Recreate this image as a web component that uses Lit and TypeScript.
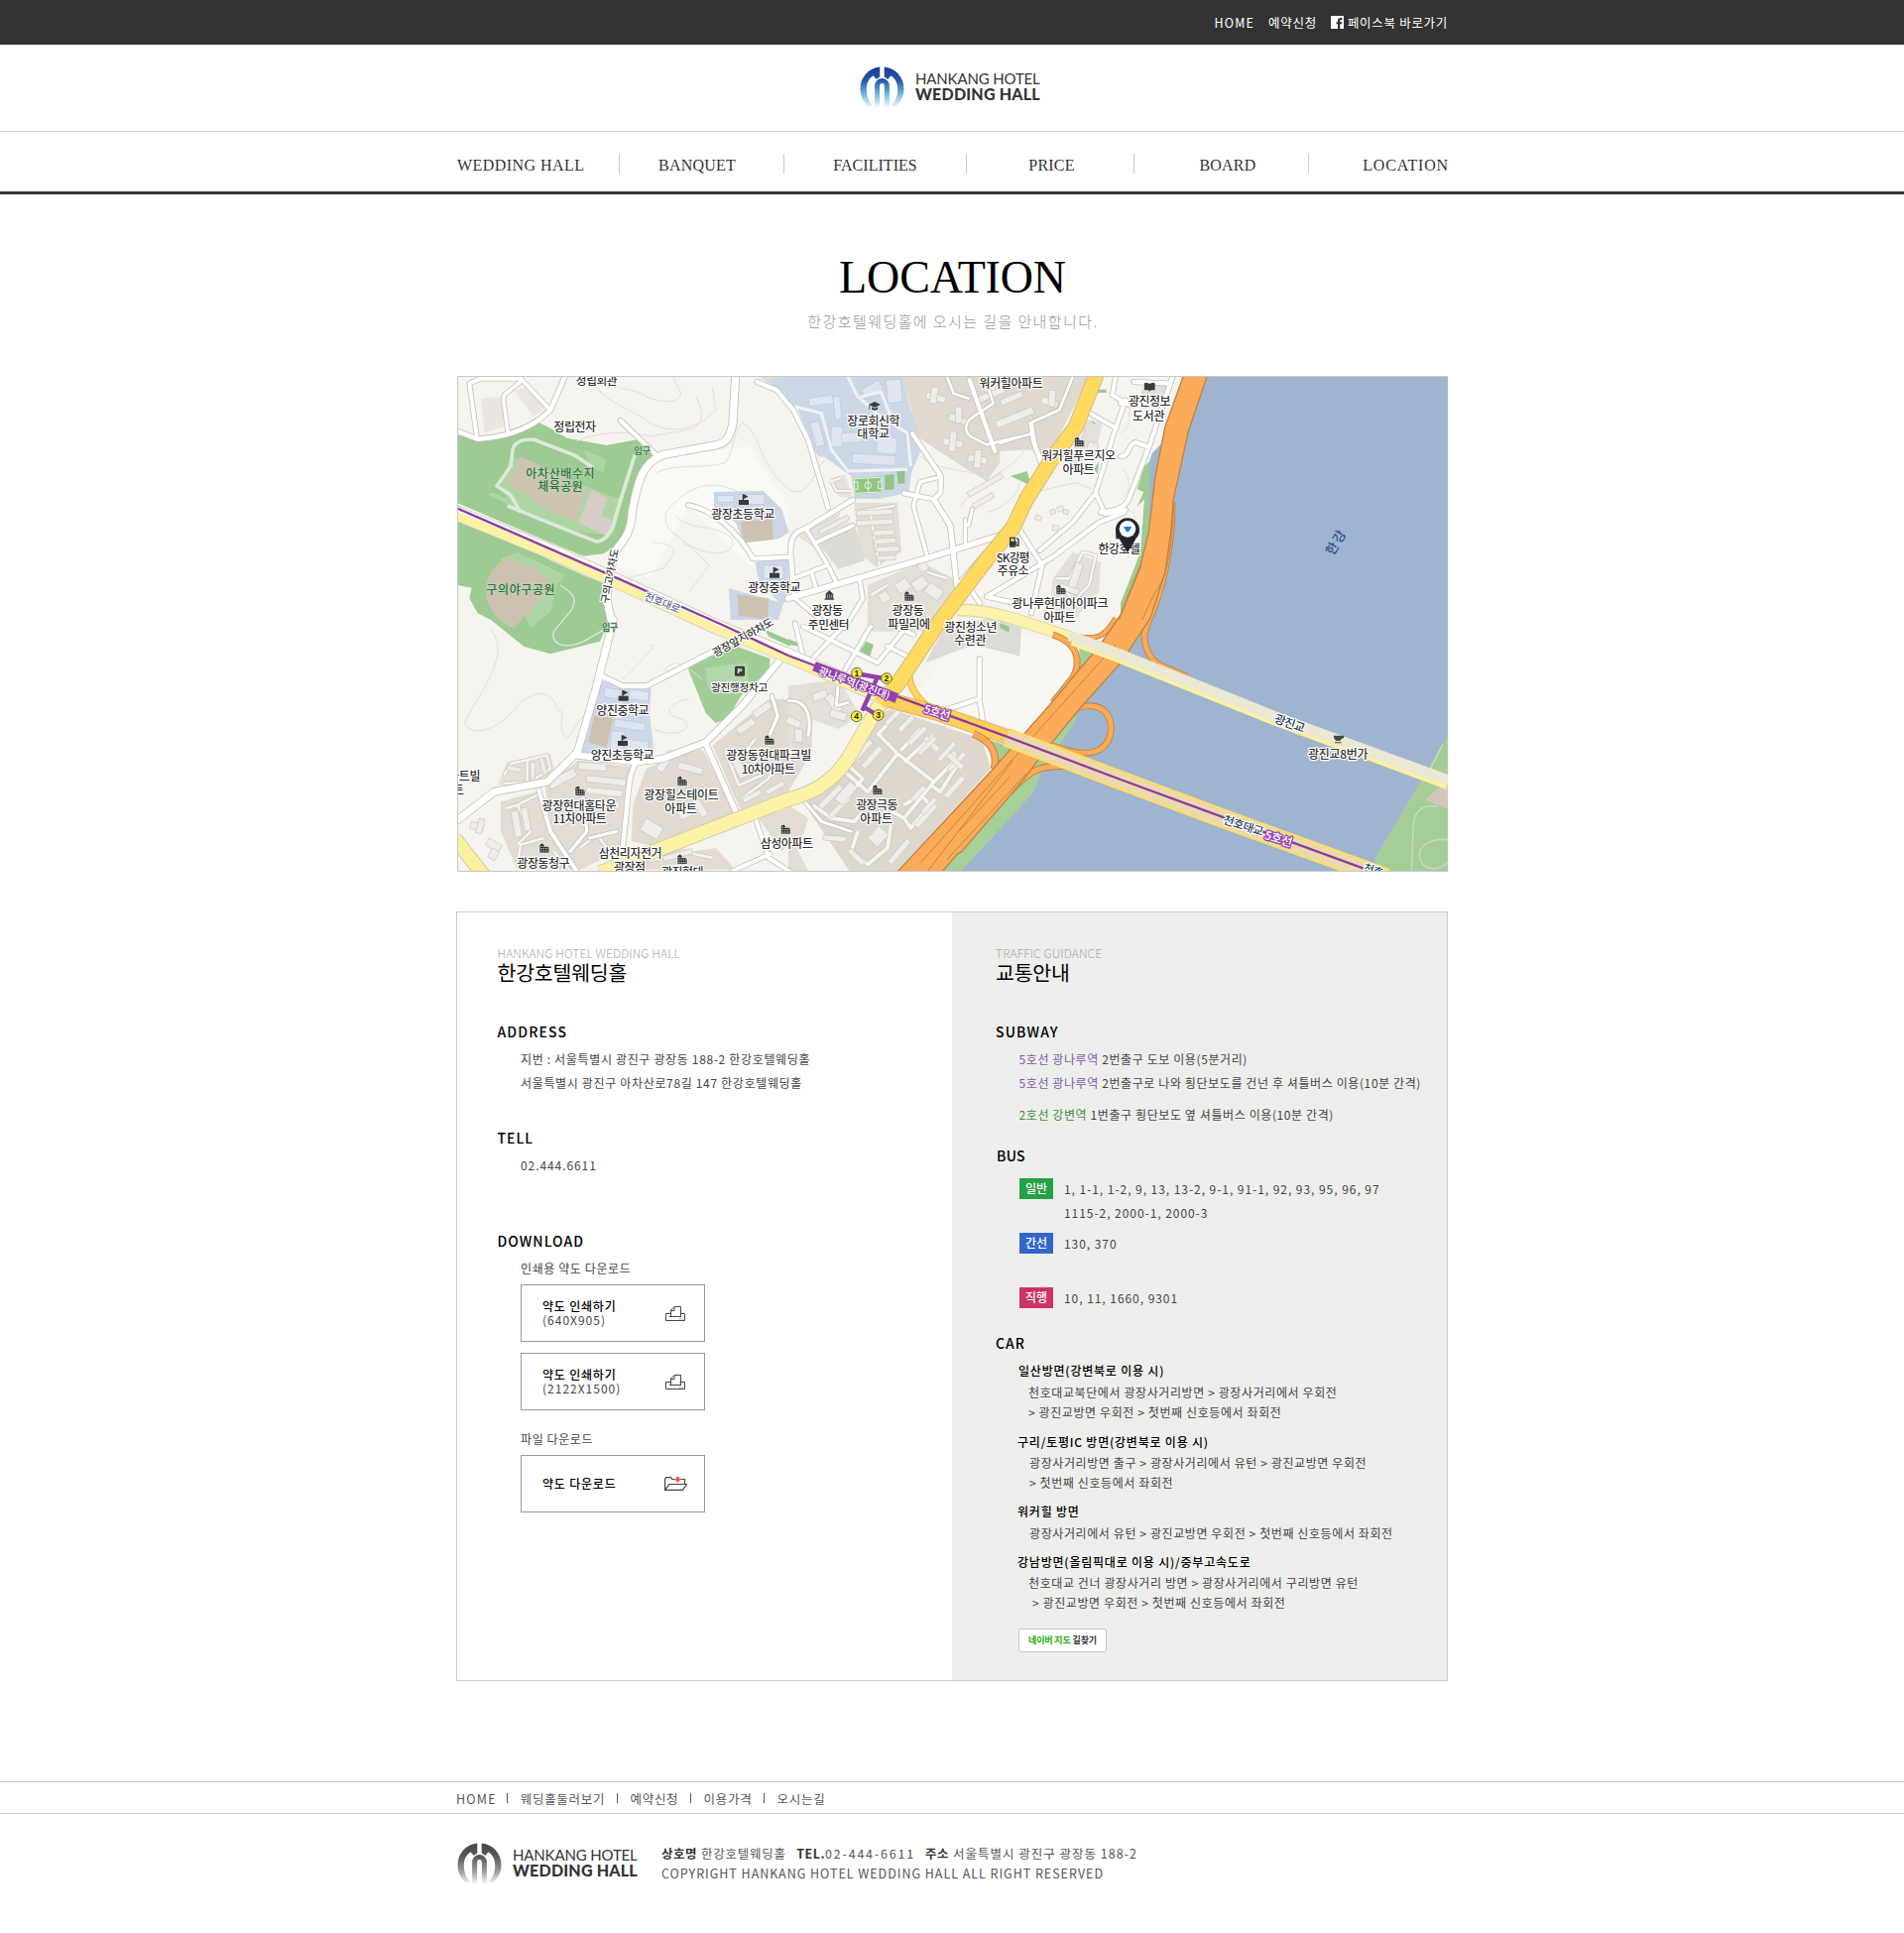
import { LitElement, html, css, svg } from "lit";
import { customElement } from "lit/decorators.js";

/* The map is drawn on a sheet of 3 units per pixel, split in tiles. */
const TILE: Record<string, [number, number]> = {
  A: [0, 0], B: [1020, 0], C: [2025, 0], D: [0, 765], E: [1020, 765], F: [2025, 765],
};
const at = (t: string) => `translate(${TILE[t][0]} ${TILE[t][1]})`;

type Area = [string, string, string];
const AREAS: Area[] = [
  ["A", "#fafaf5", "M560 225L640 265L900 240L1020 420V600L900 600L720 420L600 640L500 600Z"],
  ["E", "#f8f7f2", "M480 100L700 40L850 80L860 150L700 340L390 230Z"],
  // beige housing blocks
  ["A", "#ebe7df", "M90 95L155 90L160 180L100 200ZM190 70L240 60L290 120L250 150Z"],
  ["B", "#dfd9d0", "M345 30H910L790 265L770 290L735 250L640 255L640 290L600 345L540 310L380 205L370 120Z"],
  ["A", "#e2dcd2", "M930 30H1070V90L1020 110L985 65Z"],
  ["B", "#e3ded6", "M200 410H330L342 560L265 605L215 560Z"],
  ["B", "#e3ded6", "M240 660L400 590L500 640L520 690L430 800H240Z"],
  ["B", "#e8e4dc", "M10 500L130 440L200 480L100 560ZM130 350L170 325L195 400L150 390Z"],
  ["B", "#dcdad5", "M90 530L200 480L232 585L150 612Z"],
  ["B", "#e5e1da", "M870 150L950 170L930 260L860 300ZM860 560L945 590L940 680L870 760L790 740L800 640Z"],
  ["D", "#e0dad0", "M590 450L740 385L765 400L865 590L640 690L545 670L550 560Z"],
  ["D", "#e2dcd3", "M385 425L550 445L525 560L510 700L390 755L300 640L285 500Z"],
  ["D", "#e2dcd3", "M150 550L260 520L300 640L370 755H200L150 640Z"],
  ["D", "#e6e1d9", "M170 430L300 405L312 460L250 505L140 500Z"],
  ["D", "#e0dad0", "M790 380L960 240H1020L1095 260L1090 400L1020 520L875 575Z"],
  ["E", "#e4dfd7", "M0 200L150 180L220 290L150 330L70 300L20 370L0 480Z"],
  ["D", "#e2dcd3", "M600 720L800 690L860 755H560ZM930 600L1020 570L1060 640L1000 700Z"],
  ["E", "#ddd7ce", "M310 270L585 360L612 450L330 760H185L40 545L160 450L285 280Z"],
  ["E", "#e2dcd3", "M0 560L60 600L30 700L60 760H0Z"],
  ["E", "#dcdbd8", "M470 30L620 -10L705 25L700 110L560 75L415 130L440 80Z"],
  ["C", "#dfdfdd", "M70 45L140 50L130 100L60 90Z"],
  // campuses
  ["B", "#ccd7e6", "M-60 40L0 28H345L370 130L395 200L398 260L372 320L365 380L270 400L200 398L190 330L110 272L90 270L60 220L30 130L-40 70Z"],
  ["A", "#ccd7e6", "M795 378L945 375L1000 430L1022 500L990 520L885 530L860 470L795 430Z"],
  ["A", "#ccd7e6", "M920 590L1020 580L1025 700L1000 720L930 650ZM840 670L1005 715L990 765H845Z"],
  ["D", "#ccd8e8", "M455 185L605 205L600 280L614 405L540 430L390 405L432 255Z"],
  ["A", "#cdc2b0", "M875 470L970 460L975 522L885 532ZM865 688L960 700L958 765L870 752Z"],
  ["D", "#cdc2ad", "M432 290L492 290L470 386L415 370Z"],
  // parks
  ["A", "#9dcb93", "M20 205L80 225L170 205L265 168L300 185L350 215L470 237L570 218L612 265L590 300L560 380L545 480L500 540L460 565L400 572L250 510L20 412Z"],
  ["A", "#9dcb93", "M20 465L200 535L300 585L400 630L480 662L472 780L450 830L300 868L220 845L120 765L80 745L55 700L62 668L20 660Z"],
  ["A", "#aed6a4", "M180 270L480 390L520 400L490 510L380 500L160 410L110 385L125 380L170 400L150 355ZM400 250L470 280L460 320L420 300ZM150 580L200 560L345 630L320 660L300 740L240 790Z"],
  ["A", "#cfc4b1", "M200 282L208 270L412 366L378 466L300 440L172 350L178 325L190 330Z"],
  ["A", "#d6cdc6", "M425 370L472 398L456 450L486 462L478 514L384 472Z"],
  ["A", "#cdc2b0", "M106 690C100 640 130 590 172 580L250 604L302 650L292 680L190 790C150 780 115 740 106 690Z"],
  ["D", "#a0ce96", "M715 145L850 75L965 118L962 150L880 225L835 300L800 312L770 282Z"],
  ["D", "#b2d8ab", "M768 145L895 130L900 185L775 200Z"],
  ["B", "#9dcb93", "M672 330L722 315L735 360ZM930 68H962V78H930ZM940 285L925 310L935 325ZM915 160L930 170L925 175Z"],
  ["B", "#90c583", "M197 336L282 331L284 380L200 385ZM292 327L320 325V370L292 372ZM328 315L352 312V352L332 354Z"],
  ["E", "#98ca8f", "M235 65L258 75L245 115L212 100ZM0 58L30 70V80L0 74ZM640 10L668 20V38L640 25Z"],
  ["D", "#98ca8f", "M950 30L1025 62V80L960 50Z"],
];

const WATER = "M2215 27L2155 225L2120 262L2108 300L2105 420L2105 560L2060 760L1900 1000L1765 1255L1540 1527H3015V27Z";
const SHORE: Area[] = [
  ["C", "#9dcb93", "M72 300L50 370L70 378L50 422L72 400L60 560L0 715V775L60 640L85 500L88 285Z"],
  ["E", "#a3cd97", "M880 70L935 100L880 165Z"],
  ["E", "#a3cd97", "M615 365L690 390L630 445Z"],
  ["E", "#a6cf9a", "M865 280L872 300L760 470L742 520L690 580L520 762H440L700 490L760 380Z"],
  ["F", "#a6cd98", "M990 350L930 450L765 730L820 765H990Z"],
  ["F", "#d3c6ba", "M990 500L960 510L920 545L990 572Z"],
];

type Road = [string, number, string];
const ROADS: Road[] = [
  ["A", 14, "M20 195L80 218C180 212 250 180 300 130L345 27"],
  ["A", 12, "M78 215L55 50L90 35L210 35L300 130"],
  ["A", 11, "M172 200L158 100L160 85L215 40"],
  ["A", 22, "M860 27L852 170C842 225 825 235 780 240L640 266C580 290 565 340 547 440C545 520 500 540 490 570L470 700L487 780"],
  ["A", 13, "M512 162L620 266"],
  ["A", 13, "M717 418C790 430 870 500 913 580L1025 575"],
  ["A", 13, "M925 45L985 70L1035 130L1080 220L1140 425"],
  ["B", 14, "M195 402L50 490C10 500 0 530 10 600L15 680"],
  ["B", 17, "M0 700L130 662L420 578L640 510"],
  ["B", 13, "M375 202L462 330L460 380L440 400L350 382"],
  ["B", 11, "M460 332L398 348L378 420L418 565"],
  ["B", 15, "M440 400L490 480L510 665L595 565"],
  ["B", 12, "M55 492L120 600L148 658M85 530L195 480M15 640L112 602M70 620L85 675M20 700L110 775M215 640L225 700L170 790"],
  ["B", 10, "M535 462V530M556 430L545 480"],
  ["B", 14, "M735 175L742 225L765 290"],
  ["B", 13, "M548 40L625 255"],
  ["B", 8, "M480 30L500 80L545 95M600 50L620 110L560 150C530 170 530 200 560 215L600 235L700 210M730 170L820 130L860 30M640 230L740 200"],
  ["B", 12, "M898 132L992 185M990 27L980 85L1030 115M1020 100L985 200L930 380L860 470L760 555M930 382L958 445L1020 432"],
  ["B", 13, "M1015 440L940 470L800 575L600 695L690 715M698 490L768 600L735 745M548 670L580 715"],
  ["C", 13, "M158 27L90 230L25 400C10 430 -20 435 -60 440M85 242L45 228C20 235 30 270 0 270M40 45L150 50M0 110L60 95"],
  ["D", 21, "M490 0L440 200L382 400L290 490L130 520L20 605"],
  ["D", 15, "M450 168L520 200H590L800 92"],
  ["D", 19, "M1000 115L880 260L770 370L640 420L560 430L385 410"],
  ["D", 14, "M562 430C530 470 540 520 517 700"],
  ["D", 16, "M768 370L870 600"],
  ["D", 12, "M265 515L300 640L380 760M920 600L960 720L1030 765M965 708L850 760"],
  ["D", 10, "M970 230L988 290L965 345M400 540L410 640L360 700M420 660L500 640"],
  ["E", 13, "M578 118V240L592 330M478 272L578 238"],
  ["E", 12, "M20 10L45 112M45 20L270 130L350 30M165 20L75 115M232 50L172 150M250 20L230 50M310 15L380 45M300 80L370 115"],
  ["E", 9, "M0 245C60 240 70 300 60 350M150 200L145 260L180 250M45 545L100 610L190 640"],
];

/* lanes between the blocks of flats */
const LANES: Road[] = [
  ["E", 11, "M320 295L272 345L330 405L240 520L160 450M330 405L440 490L500 430M440 350L350 430M440 490L350 600L315 580M400 330L340 395M500 400L510 440L460 520L430 500M180 440L225 480L130 600L75 560M130 600L200 610L225 580M210 640L190 700L240 740L300 690L310 620M350 600L370 630L430 560L400 530L350 560"],
  ["D", 8, "M160 470L180 435L290 410L300 450L240 490L160 495M230 425V490M165 570L200 560L240 640L200 680M200 560L260 530M200 740L210 680L280 660M310 700L360 760M390 690L440 650L480 700M830 400L870 500L940 470L900 400M850 450L920 360M1000 400L960 480L880 540M600 730L700 700L790 720"],
  ["B", 8, "M130 345L160 335M130 345L145 375L190 375M245 430L275 600M250 690L300 660M420 620L480 640M810 640L850 640L890 560L930 570L910 660L870 700L830 680M200 440L320 420"],
];

type Block = [string, number, number, number, number, number];
const BLOCKS: Block[] = [
  ["B", 560, 95, 95, 20, -23], ["B", 590, 62, 100, 20, -23], ["B", 625, 165, 120, 22, -22], ["B", 640, 100, 70, 18, -23],
  ["B", 420, 75, 60, 20, 15], ["B", 435, 60, 20, 50, 10], ["B", 490, 140, 55, 20, 20], ["B", 505, 120, 20, 50, 0],
  ["B", 470, 215, 60, 20, 10], ["B", 490, 195, 20, 60, 5], ["B", 545, 265, 58, 20, 10], ["B", 565, 250, 20, 55, 5], ["B", 770, 90, 50, 20, 20], ["B", 790, 70, 20, 50, 5],
  ["B", 205, 435, 110, 16, -3], ["B", 205, 465, 112, 16, -3], ["B", 255, 495, 65, 16, -3], ["B", 260, 520, 65, 16, -3], ["B", 265, 545, 70, 16, -3], ["B", 270, 572, 55, 14, -3],
  ["B", 540, 380, 118, 16, -30], ["B", 555, 415, 70, 16, -30], ["B", 320, 660, 40, 34, -35], ["B", 370, 655, 44, 34, -35], ["B", 390, 600, 26, 26, -30], ["B", 430, 650, 50, 36, 35], ["B", 270, 690, 30, 30, -30],
  ["B", 60, 480, 100, 14, -28], ["B", 90, 495, 100, 14, -28], ["B", 870, 180, 28, 55, 18], ["B", 910, 225, 30, 40, 18], ["B", 870, 590, 24, 90, 18], ["B", 825, 655, 60, 18, 18],
  ["B", 750, 447, 18, 14, 20], ["B", 790, 435, 16, 13, -20], ["B", 812, 425, 18, 15, -20], ["B", 835, 430, 15, 13, 20], ["B", 800, 478, 18, 15, 10],
  ["D", 290, 490, 90, 26, -28], ["D", 385, 430, 85, 22, 4], ["D", 410, 470, 120, 20, 6], ["D", 410, 505, 110, 20, 6], ["D", 410, 540, 100, 20, 6], ["D", 320, 610, 60, 20, -30], ["D", 620, 450, 70, 22, -55], ["D", 690, 430, 75, 20, 15],
  ["D", 590, 600, 60, 40, 30], ["D", 680, 570, 50, 40, -25], ["D", 750, 540, 55, 22, 60], ["D", 180, 580, 22, 80, -10], ["D", 210, 570, 20, 70, -10], ["D", 170, 440, 45, 14, 10], ["D", 240, 430, 14, 50, 0], ["D", 265, 420, 14, 50, -15],
  ["D", 60, 610, 40, 22, 10], ["D", 85, 600, 18, 45, 15], ["D", 115, 660, 45, 24, 30], ["D", 125, 690, 24, 30, 30], ["D", 860, 330, 60, 22, -35], ["D", 910, 280, 60, 22, -35], ["D", 840, 410, 24, 80, -25], ["D", 880, 540, 60, 16, -28], ["D", 950, 515, 60, 16, -28], ["D", 640, 715, 90, 16, -15],
  ["E", 290, 310, 70, 15, -45], ["E", 330, 330, 60, 15, -45], ["E", 190, 420, 80, 17, -48], ["E", 220, 440, 80, 17, -48], ["E", 420, 350, 55, 17, 45], ["E", 360, 370, 70, 15, -45], ["E", 390, 400, 70, 15, -45], ["E", 90, 560, 90, 18, -45], ["E", 120, 590, 80, 16, -45],
  ["E", 450, 420, 70, 15, -48], ["E", 480, 450, 70, 15, -48], ["E", 490, 400, 60, 17, 45], ["E", 470, 530, 80, 16, -48], ["E", 380, 620, 90, 17, -48], ["E", 300, 730, 90, 17, -50], ["E", 190, 690, 60, 16, 45], ["E", 105, 650, 70, 16, 5], ["E", 370, 540, 55, 15, -48], ["E", 400, 580, 60, 15, -48], ["E", 240, 660, 50, 40, -48], ["E", 140, 540, 70, 30, -48],
  ["E", 70, 225, 45, 24, -20], ["E", 110, 235, 24, 60, -35], ["E", 130, 270, 50, 24, 15], ["E", 0, 290, 45, 22, 25], ["E", 20, 330, 22, 40, 0],
];
const CAMPUS: Block[] = [
  ["B", 295, 40, 45, 70, -5], ["B", 60, 95, 75, 25, -8], ["B", 135, 90, 20, 70, -6], ["B", 65, 170, 28, 75, -14], ["B", 130, 180, 35, 60, 2], ["B", 160, 200, 60, 30, -3], ["B", 195, 262, 130, 30, 3], ["B", 270, 210, 60, 50, 5], ["B", 220, 70, 60, 30, -30],
  ["A", 805, 388, 50, 22, 0], ["A", 870, 385, 78, 30, 0], ["A", 945, 600, 60, 40, 0],
  ["D", 465, 205, 50, 28, 8], ["D", 540, 210, 60, 28, 8], ["D", 495, 300, 95, 24, 8], ["D", 485, 335, 40, 60, 5], ["D", 530, 360, 70, 30, 8], ["D", 500, 240, 22, 60, 5],
];

const HIGHWAY = "M2215 27L2160 180L2130 330L2110 500L2085 600L2025 750L1960 845L1900 915L1830 1000L1720 1125L1640 1215L1350 1527H1485L1530 1475L1545 1465L1720 1262L1810 1145L1900 1035L2030 890L2065 835L2115 760L2160 620L2177 500L2185 400L2230 195L2287 27Z";
const RAMPS: Road[] = [
  ["E", 15, "M868 268C935 245 982 275 975 340C965 405 905 410 850 397L790 378"],
  ["E", 17, "M670 520C740 440 780 440 850 442"],
  ["E", 17, "M560 345C622 370 632 410 622 452"],
  ["E", 15, "M800 45C880 70 885 130 860 175L800 250"],
  ["E", 12, "M870 50C940 66 965 40 990 -5"],
  ["F", 15, "M85 -5L72 45C70 80 90 120 115 135L200 172"],
  ["C", 8, "M160 410C160 560 130 680 82 785"],
];

type Label = [string, number, number, string, number, number?, string?];
const LABELS: Label[] = [
  ["A", 440, 40, "정립회관", 125], ["A", 374, 183, "정립전자", 128], ["A", 578, 252, "입구", 50, 0, "park"],
  ["A", 330, 322, "아차산배수지", 208, 0, "park"], ["A", 330, 362, "체육공원", 136, 0, "park"], ["A", 883, 446, "광장초등학교", 192],
  ["A", 978, 668, "광장중학교", 160], ["A", 210, 675, "구의야구공원", 208, 0, "park"], ["A", 478, 632, "구의고가차도", 168, -79],
  ["A", 640, 712, "천호대로", 115, 22, "road"], ["A", 480, 785, "입구", 48, 0, "park"],
  ["B", 258, 163, "장로회신학", 160], ["B", 257, 204, "대학교", 98], ["B", 674, 50, "워커힐아파트", 193], ["B", 878, 270, "워커힐푸르지오", 225],
  ["B", 878, 310, "아파트", 97], ["B", 680, 577, "SK강평", 102], ["B", 680, 618, "주유소", 96], ["B", 1001, 552, "한강호텔", 127],
  ["B", 822, 717, "광나루현대아이파크", 292], ["B", 820, 757, "아파트", 97], ["B", 118, 736, "광장동", 95], ["B", 122, 778, "주민센터", 125],
  ["B", 362, 738, "광장동", 97], ["B", 365, 779, "파밀리에", 128], ["E", 552, 22, "광진청소년", 160], ["E", 550, 63, "수련관", 98],
  ["C", 88, 105, "광진정보", 128], ["C", 85, 148, "도서관", 98], ["C", 652, 532, "한강", 78, -60, "river"],
  ["D", 519, 275, "양진중학교", 160], ["D", 518, 410, "양진초등학교", 192], ["D", 387, 562, "광장현대홈타운", 225], ["D", 389, 603, "11차아파트", 163],
  ["D", 279, 736, "광장동청구", 160], ["D", 542, 708, "삼천리자전거", 192], ["D", 540, 748, "광장점", 96], ["D", 700, 765, "광진현대", 128],
  ["D", 696, 530, "광장힐스테이트", 227], ["D", 695, 573, "아파트", 98], ["D", 961, 409, "광장동현대파크빌", 258], ["D", 960, 451, "10차아파트", 163],
  ["D", 1015, 678, "삼성아파트", 160], ["D", 872, 203, "광진행정차고", 172], ["D", 882, 52, "광장앞지하차도", 205, -29],
  ["D", 40, 474, "아트빌", 98], ["D", -10, 515, "아파트", 98], ["E", 268, 560, "광장극동", 127], ["E", 266, 602, "아파트", 98],
  ["E", 200, 190, "광나루역(광진대)", 228, 20, "station"], ["E", 450, 280, "5호선", 82, 17, "line"],
  ["F", 512, 313, "광진교", 95, 19, "bridge"], ["F", 658, 406, "광진교8번가", 182], ["F", 372, 622, "천호대교", 125, 18, "bridge"],
  ["F", 478, 662, "5호선", 85, 17, "line"], ["F", 765, 757, "천호", 60, 17, "bridge"],
];
const FLATS: [string, number, number][] = [
  ["B", 881, 226], ["B", 825, 673], ["B", 366, 693], ["D", 390, 517], ["D", 699, 487], ["D", 963, 363], ["D", 282, 690], ["D", 699, 724], ["D", 1012, 633], ["E", 270, 514],
];
const SCHOOLS: [string, number, number][] = [["A", 885, 402], ["A", 978, 623], ["D", 521, 230], ["D", 519, 366]];
const EXITS: [number, number, string][] = [[207, 161, "1"], [297, 177, "2"], [272, 288, "3"], [206, 292, "4"]];

const CONTOURS: Area[] = [
  ["A", "", "M470 30C500 80 560 60 590 90C640 110 690 110 695 80L670 30M430 50C480 120 560 130 600 170C680 210 760 180 800 130L790 60M380 225C430 200 520 190 600 210L720 190C760 180 770 140 740 90"],
  ["A", "", "M880 170C920 180 930 260 980 330L1020 370M880 170C850 200 860 240 830 290C760 310 680 290 620 320M870 380C800 340 720 350 650 440C640 500 680 500 720 540L780 600L720 680M610 530C700 540 680 560 640 610L530 640M680 450C720 500 800 470 850 520C860 570 790 580 700 530"],
  ["D", "", "M120 30C180 100 100 200 40 310C60 360 150 330 200 260C260 200 310 220 320 270C360 280 310 320 350 360L400 290M600 80C640 60 560 140 520 180M640 160C680 100 720 150 760 180M720 240C650 250 640 290 700 300C740 330 680 360 610 330"],
  ["B", "", "M0 370C60 400 70 330 110 280M400 270C480 330 560 300 620 350M520 420C580 340 700 300 720 240M600 440C640 430 690 400 700 350M740 380L870 350L920 370"],
  ["C", "", "M0 200C40 180 20 140 30 120M10 310C40 360 20 380 0 400M20 430C60 440 50 520 20 580"],
];

const block = (b: Block) => svg`<rect x=${b[1]} y=${b[2]} width=${b[3]} height=${b[4]}
  transform="${at(b[0])} rotate(${b[5]} ${b[1]} ${b[2]})"/>`;
const area = (a: Area) => svg`<path transform=${at(a[0])} fill=${a[1]} d=${a[2]}/>`;
const stroke = (r: Road, extra: number) => svg`<path transform=${at(r[0])} stroke-width=${r[1] + extra} d=${r[2]}/>`;

/* A name squeezed into a short width is set smaller. */
const nameSize = (s: string, w: number) =>
  /^[가-힣]+$/.test(s) ? Math.min(36, Math.round(w / (s.length * 0.89))) : 36;

@customElement("area-map")
export class AreaMap extends LitElement {
  static styles = css`
    :host { display: block; width: 999px; height: 500px; box-sizing: border-box; }
    svg { display: block; }
    text { font-family: "Noto Sans CJK KR", sans-serif; font-size: 36px; font-weight: 500; fill: #333;
      stroke: #fff; stroke-width: 7px; stroke-linejoin: round; paint-order: stroke; text-anchor: middle; }
    text.park { fill: #3d6a4c; stroke: #b4dcae; stroke-width: 4px; }
    text.road { fill: #6468a8; }
    text.river { fill: #2a5088; stroke: none; }
    text.station { fill: #fff; stroke: #8d3fac; stroke-width: 5px; }
    text.line { fill: #fff; stroke: #9a48b4; stroke-width: 8px; }
    text.bridge { fill: #1f3f66; }
    text.exit { fill: #222; stroke: none; font: bold 26px "Liberation Sans", sans-serif; }
    text.park-sign { fill: #fff; stroke: none; font: bold 22px "Liberation Sans", sans-serif; }
  `;

  render() {
    return html`<svg width="999" height="500" viewBox="18 27 2997 1500">
      <rect x="18" y="27" width="2997" height="1500" fill="#f5f4ee"/>
      ${AREAS.map(area)}
      <g fill="none" stroke="#e2dfd6" stroke-width="3">${CONTOURS.map((c) => svg`<path transform=${at(c[0])} d=${c[2]}/>`)}</g>
      <g fill="none" stroke="#dce9d9" stroke-width="11" stroke-linejoin="round">
        <path d="M210 440L180 388L138 360L180 300L186 250C192 225 215 218 250 220L375 268L430 305M170 420L380 505L440 528C470 525 480 500 490 480L510 410L556 265"/>
        <path stroke-width="4" d="M330 660C380 690 380 710 360 740L310 800C300 850 360 850 400 830L470 790"/>
      </g>
      <path d="${WATER}" fill="#9fb5cf"/>
      ${SHORE.map(area)}
      <g fill="none" stroke="#bfdcb6" stroke-width="5"><path d="M2985 1330C2930 1320 2910 1350 2910 1400L2905 1527M3015 1430C2960 1425 2925 1450 2930 1480C2935 1520 2980 1530 3015 1500M3000 1140L2960 1220"/></g>
      <g fill="#dde5f0" stroke="#b9c7db" stroke-width="2">${CAMPUS.map(block)}</g>
      <path d="M1200 30L1230 90L1300 150L1380 200L1390 300M1040 120L1120 140L1150 250L1200 315L1380 310M1240 90L1300 75L1330 150" fill="none" stroke="#eef2f7" stroke-width="9"/>
      <path d="M1219 338L1301 334L1303 378L1221 382ZM1260 336L1262 380M1251 358a10 10 0 1 0 20 0a10 10 0 1 0 -20 0M1220 348H1230V370H1221M1302 346H1292V368H1302" fill="none" stroke="#e8f5e4" stroke-width="3"/>
      <g fill="none" stroke="#cfc8c1" stroke-linejoin="round">${LANES.map((r) => stroke(r, 5))}</g>
      <g fill="none" stroke="#f6f5f1" stroke-linejoin="round">${LANES.map((r) => stroke(r, 0))}</g>
      <g fill="#f0eeea" stroke="#cdc5bc" stroke-width="2">${BLOCKS.map(block)}</g>
      <g fill="none" stroke="#c5c0bc" stroke-linejoin="round" stroke-linecap="round">${ROADS.map((r) => stroke(r, 5))}</g>
      <g fill="none" stroke="#fff" stroke-linejoin="round" stroke-linecap="round">${ROADS.map((r) => stroke(r, 0))}</g>

      <g fill="none" stroke-linejoin="round">
        <path d="M10 1425L100 1540" stroke="#c9c3a8" stroke-width="45"/><path d="M10 1425L100 1540" stroke="#fdf0a0" stroke-width="40"/>
        <path d="M1300 1015L1200 1185C1150 1260 1090 1290 1020 1308L870 1366L640 1455L450 1530" stroke="#cfc6a0" stroke-width="45"/>
        <path d="M1300 1015L1200 1185C1150 1260 1090 1290 1020 1308L870 1366L640 1455L450 1530" stroke="#fdf2a6" stroke-width="40"/>
        <path d="M1530 735C1640 735 1700 760 1880 820L2040 878" stroke="#d8cfa4" stroke-width="37"/>
        <path d="M1530 735C1640 735 1700 760 1880 820L2040 878" stroke="#fdf3ac" stroke-width="32"/>
        <path d="M10 440L310 562L590 688L800 785L1020 873L1300 995" stroke="#cbc5b4" stroke-width="46"/>
        <path d="M10 440L310 562L590 688L800 785L1020 873L1300 995" stroke="#fff" stroke-width="41"/>
        <path d="M10 448L310 570L590 697L800 793L1020 882L1300 1003" stroke="#fcf1a4" stroke-width="26"/>
        <path d="M1385 935C1390 980 1420 1010 1450 1035" stroke="#d8b070" stroke-width="22"/><path d="M1385 935C1390 980 1420 1010 1450 1035" stroke="#ffd35c" stroke-width="17"/>
        <path d="M1310 1003L1480 1050L1700 1125" stroke="#d3ae6c" stroke-width="47"/>
        <path d="M1955 15L1890 180L1810 290L1740 400L1700 485L1610 595L1470 780L1350 960L1300 1020" stroke="#cdb67c" stroke-width="48"/>
        <path d="M1955 15L1890 180L1810 290L1740 400L1700 485L1610 595L1470 780L1350 960L1300 1020" stroke="#ffda5e" stroke-width="43"/>
        <path d="M1310 1003L1480 1050L1700 1125" stroke="#ffcd58" stroke-width="42"/>
      </g>
      <g fill="none" stroke="#b9803f">${RAMPS.map((r) => stroke(r, 5))}</g>
      <g fill="none" stroke="#fba957">${RAMPS.map((r) => stroke(r, 0))}</g>
      <path d="${HIGHWAY}" fill="#fbab59" stroke="#bd8444" stroke-width="4" stroke-linejoin="round"/>
      <g fill="none" stroke="#c4853f" stroke-width="3">
        <path d="M2186 410C2180 560 2165 640 2130 680L2090 765M2088 600L2020 765M2010 840L1700 1185L1420 1500M1740 1230L1500 1490M1690 1240L1540 1400M1700 1190L1440 1527"/>
      </g>
      <g fill="none">
        <path d="M1880 825L2030 881L2485 1064L3015 1260" stroke="#fbf1a0" stroke-width="36"/>
        <path d="M1870 812L2030 872L2485 1055L3015 1250" stroke="#ebe9d3" stroke-width="32"/>
        <path d="M1680 1120L2030 1252L2360 1375L2830 1545" stroke="#fddc70" stroke-width="58"/>
        <path d="M1680 1120L2030 1252L2360 1375L2830 1545" stroke="#ead9b0" stroke-width="42"/>
        <path d="M10 424L500 638L820 780L1020 873L1350 997L1680 1118L2025 1248L2330 1360L2760 1517" stroke="#8b3d9f" stroke-width="7"/>
        <path d="M1098 905L1348 1002" stroke="#9340b2" stroke-width="30"/>
        <path d="M1240 930L1308 942M1287 944L1243 1040M1245 1026L1280 1048" stroke="#9340b2" stroke-width="13"/>
      </g>

      ${FLATS.map(([t, x, y]) => svg`<g transform="${at(t)} translate(${x - 15} ${y - 15})">
        <path fill="#333" stroke="#fff" stroke-width="2" d="M0 6L3 2H6V0H11V2L15 6V10H24L30 14V30H0Z"/>
        <path stroke="#fff" stroke-width="2.4" stroke-dasharray="4 3" d="M4 10H14M4 17H28M4 24H28"/></g>`)}
      ${SCHOOLS.map(([t, x, y]) => svg`<path transform="${at(t)} translate(${x} ${y})" fill="#3a3a3a" d="M-15 0H-4V-17H0L14 -10L0 -3V0H15V15H-15Z"/>`)}
      <g transform="translate(873 920)"><rect x="-15" y="-15" width="30" height="30" rx="4" fill="#3d3d3d"/><text class="park-sign" y="8">P</text></g>
      <path transform="translate(1144 690)" fill="#3a3a3a" stroke="#fff" stroke-width="1.5" d="M-15 15V10H-12V-4L0 -15L12 -4V10H15V15ZM-6 -2V10M0 -2V10M6 -2V10"/>
      <path transform="translate(1281 118)" fill="#3a3a3a" d="M-18 -4L0 -13L18 -4L0 4ZM-9 3L0 8L9 3V10L0 14L-9 10ZM-17 -3V10H-14V-3Z"/>
      <path transform="translate(2113 60)" fill="#3a3a3a" d="M-16 -11Q-6 -14 0 -9Q6 -14 16 -11V10H4L0 14L-4 10H-16Z"/>
      <path transform="translate(1703 530)" fill="#3a3a3a" fill-rule="evenodd" d="M-14 -15H4V-2H8V8H11V-6L6 -12L9 -14L15 -8V12H5V2H4V15H-14ZM-10 -11V-3H0V-11Z"/>
      <path transform="translate(2685 1125)" fill="#444" d="M-16 -10H14Q18 -10 15 -4Q12 0 8 0L4 6H-8Q-15 0 -16 -10ZM-12 10H8V13H-12Z"/>
      <rect x="2011" y="492" width="26" height="28" fill="#222"/>

      ${LABELS.map(([t, x, y, s, w, r, c]) => svg`<text class=${c ?? ""} transform="${at(t)} translate(${x} ${y}) rotate(${r ?? 0})"
        y="13" textLength=${w} style="font-size:${c === "station" ? 32 : c === "river" ? 40 : nameSize(s, w)}px">${s}</text>`)}
      ${EXITS.map(([x, y, n]) => svg`<g transform="translate(${1020 + x} ${765 + y})"><circle r="16" fill="#f8ee3c" stroke="#6b6430" stroke-width="3"/><text class="exit" y="9">${n}</text></g>`)}

      <path d="M2046 562L2020 518A36 36 0 1 1 2072 518Z" fill="#23252a"/>
      <circle cx="2046" cy="490" r="25" fill="#fff"/>
      <path d="M2034 483H2059L2050 497Q2046 501 2042 497Z" fill="#0d78e6"/>
      <path d="M3015 28.5H19.5V1525.5H3015" fill="none" stroke="#c8c8c8" stroke-width="3"/>
    </svg>`;
  }
}

@customElement("hall-logo")
export class HallLogo extends LitElement {
  static properties = { tone: {} };
  declare tone: string;
  static styles = css`
    :host { display: flex; gap: 11px; width: 183px; height: 44px; font-family: Lato, sans-serif; color: #333; }
    svg { flex: none; }
    .name { padding-top: 5px; line-height: 16px; white-space: nowrap; }
    .thin { font-size: 15px; letter-spacing: -0.15px; }
    .thick { font-size: 16px; font-weight: 900; letter-spacing: 0.2px; }
  `;
  render() {
    const blue = this.tone === "blue";
    return html`<svg width="45" height="44" viewBox="0 0 45 44">
        <defs><linearGradient id="g" gradientUnits="userSpaceOnUse" x1="0" y1="0" x2="0" y2="44">
          <stop offset=".1" stop-color=${blue ? "#1b3f9c" : "#4a4a4a"}/><stop offset=".35" stop-color=${blue ? "#2459ab" : "#5a5a5a"}/>
          <stop offset=".7" stop-color=${blue ? "#7fc4dc" : "#a2a2a2"}/><stop offset=".98" stop-color="#fff"/></linearGradient></defs>
        <path fill="url(#g)" d="M20.3 1.4V11.5L16.6 14L13.6 10.2C9 13 6.8 18 6.8 24C6.8 31 9 36 13 40L10 42C4 38 .5 31 .5 23.5C.5 11.5 9 2.5 20.3 1.4ZM24.7 1.4V11.5L28.4 14L31.4 10.2C36 13 38.2 18 38.2 24C38.2 31 36 36 32 40L35 42C41 38 44.5 31 44.5 23.5C44.5 11.5 36 2.5 24.7 1.4Z"/>
        <path fill="none" stroke="url(#g)" stroke-width="5" d="M17.6 43V20.500a4.900 4.900 0 0 1 9.800 0V43"/>
      </svg>
      <div class="name"><div class="thin">HANKANG HOTEL</div><div class="thick">WEDDING HALL</div></div>`;
  }
}

const PRINTER = html`<svg width="20" height="15" viewBox="0 0 20 15" fill="none" stroke="#4a453c">
  <path d="M5 7.500H.500V14.500H19.500V7.500H15.500M4 10.500H16M5.500 10V4L9 .500H15.500V10M5.500 4.500H9V1"/><path d="M14 13H18" stroke="#f26a62" stroke-dasharray="1.500 1"/></svg>`;
const FOLDER = html`<svg width="23" height="14" viewBox="0 0 23 14" fill="none" stroke="#4a453c" stroke-width="1.2">
  <path d="M.6 13V2L2 .6H6.500L8 2.500H20.500V7M.6 13.400L5 7.500H22.400L18.500 13.400Z"/><path d="M12 0H15V2H17L13.500 6L10 2H12Z" fill="#f2504e" stroke="none"/></svg>`;

const ROUTES = [
  { cls: "first", name: "일산방면(강변북로 이용 시)", steps: ["천호대교북단에서 광장사거리방면 > 광장사거리에서 우회전", "> 광진교방면 우회전 > 첫번째 신호등에서 좌회전"] },
  { cls: "guri", name: "구리/토평IC 방면(강변북로 이용 시)", steps: ["광장사거리방면 출구 > 광장사거리에서 유턴 > 광진교방면 우회전", "> 첫번째 신호등에서 좌회전"] },
  { cls: "walker", name: "워커힐 방면", steps: ["광장사거리에서 유턴 > 광진교방면 우회전 > 첫번째 신호등에서 좌회전"] },
  { cls: "gangnam", name: "강남방면(올림픽대로 이용 시)/중부고속도로", steps: ["천호대교 건너 광장사거리 방면 > 광장사거리에서 구리방면 유턴", "> 광진교방면 우회전 > 첫번째 신호등에서 좌회전"] },
];

@customElement("app-root")
export class AppRoot extends LitElement {
  static styles = css`
    :host { display: block; height: 1949px; background: #fff; color: #333; font-family: "Noto Sans CJK KR", sans-serif; overflow: hidden; }
    p, h1, h2, h3, h4 { margin: 0; font-weight: 400; white-space: nowrap; }
    .wrap { width: 1000px; margin: 0 auto; }
    .util { height: 45px; background: #333; color: #fff; }
    .util .wrap { display: flex; justify-content: flex-end; align-items: center; height: 45px; font-size: 12.500px; letter-spacing: 0.7px; }
    .util span { white-space: nowrap; }
    .util .home, .links .home { letter-spacing: 1.2px; }
    .util .book { margin: 0 14px; }
    .util svg { margin-right: 4px; }
    .brand { display: flex; justify-content: center; padding: 21px 0 0 0; height: 66px; border-bottom: 1px solid #ccc; }
    .brand hall-logo { margin-right: 3px; }
    nav { height: 60px; border-bottom: 3px solid #333; }
    .menu { display: grid; grid-template-columns: 164px 166px 184px 169px 176px 140px; padding: 22px 0 0 1px; width: 999px; font: 16px/24px "Liberation Serif", serif; }
    .menu span { height: 20px; text-align: center; border-right: 1px solid #ccc; white-space: nowrap; box-sizing: border-box; letter-spacing: 0.2px; }
    .menu span:first-child { text-align: left; letter-spacing: 0.45px; }
    .menu span:last-child { text-align: right; border: 0; letter-spacing: 0.85px; margin-right: -1px; }
    .menu .banquet { padding-right: 9px; } .menu .facilities { letter-spacing: 0.04px; } .menu .price { padding-left: 3px; } .menu .board { padding-left: 13px; }
    .title { padding-top: 54px; text-align: center; }
    h1 { color: #000; font: 46px/60px "Liberation Serif", serif; letter-spacing: -0.15px; padding-left: 1px; }
    .lead { margin-top: 2px; color: #999; font-size: 15px; line-height: 24px; font-weight: 300; letter-spacing: 1.42px; padding-left: 2px; }
    area-map { margin: 43px 0 40px 1px; }
    .panel { display: grid; grid-template-columns: 499px 1fr; box-sizing: border-box; height: 776px; border: 1px solid #ccc; }
    .col { padding: 35px 0 0 40.500px; font-size: 12px; line-height: 24px; letter-spacing: 0.6px; }
    .col.traffic { background: #eeeeec; padding-left: 44px; }
    .eyebrow { color: #aaa; font-size: 12px; line-height: 12px; font-weight: 300; letter-spacing: 0.12px; }
    h2 { margin-top: 1px; color: #000; font-size: 20.500px; line-height: 24px; letter-spacing: -0.2px; }
    h3 { color: #000; font: 500 14px/20px "Noto Sans CJK KR", sans-serif; letter-spacing: 1.02px; }
    .a1 { margin-top: 38px; letter-spacing: 1.15px; } .a2 { margin-top: 33px; } .a3 { margin-top: 54px; }
    .body { padding-left: 23.500px; margin-top: 6px; color: #444; }
    .traffic .body { padding-left: 23.500px; }
    .addr { letter-spacing: 0.66px; }
    .nums { letter-spacing: 0.92px; }
    .card { display: flex; align-items: center; justify-content: space-between; box-sizing: border-box; width: 186px; height: 58px; margin-top: 4px; padding: 0 19px 0 21px; border: 1px solid #999; line-height: 14px; }
    .card + .card { margin-top: 11px; } .card.file { padding-right: 17px; }
    .card b { display: block; color: #000; font-weight: 500; letter-spacing: 0.8px; }
    .card span { letter-spacing: 1px; }
    .label2 { margin-top: 17px; }
    .violet { color: #7f55aa; } .green { color: #3c8a3c; }
    .gap8 { margin-top: 8px; }
    .bus { margin-top: 19px; padding-left: 1px; letter-spacing: 0.3px; } .car { margin-top: 23px; }
    .rows { padding-left: 24px; margin-top: 12px; display: grid; grid-template-columns: 34px auto; column-gap: 11px; color: #444; letter-spacing: 0.95px; }
    .tag { margin-top: 1px; width: 34px; height: 21px; line-height: 20px; text-align: center; color: #fff; font-weight: 500; letter-spacing: 0; }
    .tag.g { background: #25a244; } .tag.b { background: #3366cc; } .tag.r { background: #cc3366; }
    .r2 { margin-top: 7px; } .r3 { margin-top: 31px; } .tag.r2 { margin-top: 8px; } .tag.r3 { margin-top: 32px; }
    .route { padding-left: 22px; line-height: 20px; color: #444; }
    .route.first { margin-top: 8px; padding-left: 23px; } .route.guri { margin-top: 10px; } .route.walker, .route.gangnam { margin-top: 9px; }
    .route h4 { font-size: 12px; font-weight: 500; color: #000; letter-spacing: 0.79px; }
    .steps { padding-left: 12px; margin-top: 1px; }
    .first .steps { padding-left: 10px; margin-top: 2px; } .walker .steps { margin-top: 2px; } .gangnam .steps { padding-left: 11px; }
    .gangnam .steps p + p { padding-left: 4px; }
    .find { display: block; box-sizing: border-box; width: 89px; height: 24px; margin: 16px 0 0 23px; border: 1px solid #c8c8c8; border-radius: 3px; background: #fff; font-size: 9px; line-height: 21px; font-weight: 700; text-align: center; color: #333; letter-spacing: -0.15px; white-space: nowrap; }
    .find em { font-style: normal; color: #1fae05; }
    .links { margin-top: 101px; border: solid #ccc; border-width: 1px 0; height: 31px; }
    .links .wrap { display: flex; align-items: center; height: 32px; font-size: 12.500px; color: #555; letter-spacing: 0.72px; }
    .links i { width: 1px; height: 10px; background: #555; margin: 0 12.500px 0 11.700px; }
    .links .home + i { margin-left: 10.500px; }
    .foot { display: flex; padding: 28px 0 0 1px; width: 999px; }
    .info { margin-left: 23px; padding-top: 2px; font-size: 12.500px; line-height: 20px; color: #555; }
    .info div { display: flex; letter-spacing: 0.75px; }
    .info b { font-weight: 700; color: #333; letter-spacing: 0.5px; margin-right: 4px; }
    .info span { margin-right: 10.500px; }
    .info .tel { margin-right: 0; }
    .info .no { letter-spacing: 1.790px; margin-right: 10px; }
    .info .place { letter-spacing: 1px; }
    .info p { letter-spacing: 0.97px; }
  `;

  render() {
    return html`
      <div class="util"><div class="wrap">
        <span class="home">HOME</span><span class="book">예약신청</span>
        <svg width="13" height="13" viewBox="0 0 13 13"><path fill="#fff" fill-rule="evenodd" d="M0 0H13V13H9.300V8.200H11L11.400 6.200H9.300V5C9.300 4.300 9.600 4 10.300 4H11.400V2H9.700C8 2 7 3 7 4.700V6.200H5.500V8.200H7V13H0Z"/></svg>
        <span>페이스북 바로가기</span>
      </div></div>
      <div class="brand"><hall-logo tone="blue"></hall-logo></div>
      <nav><div class="wrap menu">
        <span>WEDDING HALL</span><span class="banquet">BANQUET</span><span class="facilities">FACILITIES</span>
        <span class="price">PRICE</span><span class="board">BOARD</span><span>LOCATION</span>
      </div></nav>
      <div class="title"><h1>LOCATION</h1><p class="lead">한강호텔웨딩홀에 오시는 길을 안내합니다.</p></div>
      <div class="wrap">
        <area-map></area-map>
        <div class="panel">
          <section class="col">
            <p class="eyebrow">HANKANG HOTEL WEDDING HALL</p>
            <h2>한강호텔웨딩홀</h2>
            <h3 class="a1">ADDRESS</h3>
            <div class="body addr"><p>지번 : 서울특별시 광진구 광장동 188-2 한강호텔웨딩홀</p><p>서울특별시 광진구 아차산로78길 147 한강호텔웨딩홀</p></div>
            <h3 class="a2">TELL</h3>
            <div class="body nums"><p>02.444.6611</p></div>
            <h3 class="a3">DOWNLOAD</h3>
            <div class="body"><p>인쇄용 약도 다운로드</p>
              <div class="card"><p><b>약도 인쇄하기</b><span>(640X905)</span></p>${PRINTER}</div>
              <div class="card"><p><b>약도 인쇄하기</b><span>(2122X1500)</span></p>${PRINTER}</div>
              <p class="label2">파일 다운로드</p>
              <div class="card file"><b>약도 다운로드</b>${FOLDER}</div>
            </div>
          </section>
          <section class="col traffic">
            <p class="eyebrow">TRAFFIC GUIDANCE</p>
            <h2>교통안내</h2>
            <h3 class="a1">SUBWAY</h3>
            <div class="body">
              <p><span class="violet">5호선 광나루역</span> 2번출구 도보 이용(5분거리)</p>
              <p><span class="violet">5호선 광나루역</span> 2번출구로 나와 횡단보도를 건넌 후 셔틀버스 이용(10분 간격)</p>
              <p class="gap8"><span class="green">2호선 강변역</span> 1번출구 횡단보도 옆 셔틀버스 이용(10분 간격)</p>
            </div>
            <h3 class="bus">BUS</h3>
            <div class="rows">
              <div class="tag g">일반</div><div><p>1, 1-1, 1-2, 9, 13, 13-2, 9-1, 91-1, 92, 93, 95, 96, 97</p><p>1115-2, 2000-1, 2000-3</p></div>
              <div class="tag b r2">간선</div><p class="r2">130, 370</p>
              <div class="tag r r3">직행</div><p class="r3">10, 11, 1660, 9301</p>
            </div>
            <h3 class="car">CAR</h3>
            ${ROUTES.map((r) => html`<div class="route ${r.cls}"><h4>${r.name}</h4>
              <div class="steps">${r.steps.map((s) => html`<p>${s}</p>`)}</div></div>`)}
            <div class="find"><em>네이버 지도</em> 길찾기</div>
          </section>
        </div>
      </div>
      <div class="links"><div class="wrap">
        <span class="home">HOME</span><i></i><span>웨딩홀둘러보기</span><i></i><span>예약신청</span><i></i><span>이용가격</span><i></i><span>오시는길</span>
      </div></div>
      <div class="wrap foot">
        <hall-logo tone="grey"></hall-logo>
        <div class="info">
          <div><b>상호명</b><span>한강호텔웨딩홀</span><b class="tel">TEL.</b><span class="no">02-444-6611</span><b>주소</b><span class="place">서울특별시 광진구 광장동 188-2</span></div>
          <p>COPYRIGHT HANKANG HOTEL WEDDING HALL ALL RIGHT RESERVED</p>
        </div>
      </div>`;
  }
}
